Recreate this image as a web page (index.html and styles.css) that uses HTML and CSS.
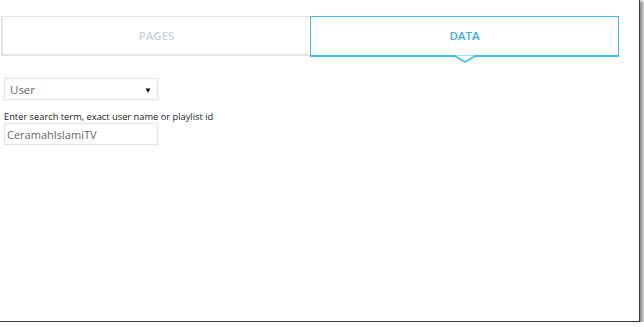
FILE: index.html
```html
<!DOCTYPE html>
<html>
<head>
<meta charset="utf-8">
<link rel="stylesheet" href="styles.css">
</head>
<body>
<div class="frame">
  <div class="tabs">
    <div class="tab">PAGES</div>
    <div class="tab active">DATA
      <svg class="pointer" width="22" height="8" viewBox="0 0 22 8"><polyline points="0,0.5 11,7 22,0.5" fill="#fff" stroke="#3fbdf6" stroke-width="1.6"/></svg>
    </div>
  </div>
  <div class="form">
    <div class="select"><span>User</span><span class="caret">▼</span></div>
    <label class="label">Enter search term, exact user name or playlist id</label>
    <div class="input">CeramahIslamiTV</div>
  </div>
</div>
</body>
</html>
```
FILE: styles.css
```css
html, body {
  margin: 0;
  padding: 0;
  background: #fff;
}
.frame {
  width: 639px;
  height: 321px;
  border-right: 1px solid #3a3a3a;
  border-bottom: 1px solid #3a3a3a;
  box-shadow: 2px 2px 3px 1px rgba(0,0,0,0.45);
  background: #fff;
  font-family: "Open Sans", "Noto Sans", sans-serif;
}
.tabs {
  display: flex;
  padding: 16px 20px 0 1px;
}
.tab {
  flex: 1;
  height: 40px;
  box-sizing: border-box;
  border: 1px solid #e4e4e4;
  border-width: 1px 0 2px 2px;
  display: flex;
  align-items: center;
  justify-content: center;
  font-size: 11.5px;
  font-weight: 600;
  color: #c9d1e0;
  position: relative;
}
.tab.active {
  height: 41px;
  border: 1px solid #3fbdf6;
  border-bottom-width: 2px;
  color: #3ea9ef;
  padding-bottom: 1px;
}
.pointer {
  position: absolute;
  left: 50%;
  margin-left: -11px;
  bottom: -8px;
}
.form {
  padding: 21px 0 0 4px;
  display: flex;
  flex-direction: column;
  align-items: flex-start;
}
.select {
  width: 154px;
  height: 22px;
  box-sizing: border-box;
  border: 1px solid #e2e2e2;
  display: flex;
  align-items: center;
  justify-content: space-between;
  padding: 0 5px 0 5px;
  font-size: 11.5px;
  color: #666;
}
.caret {
  font-size: 8px;
  color: #111;
}
.label {
  margin-top: 11px;
  font-size: 9.3px;
  color: #222;
  line-height: 12px;
}
.input {
  width: 154px;
  height: 22px;
  box-sizing: border-box;
  border: 1px solid #e2e2e2;
  display: flex;
  align-items: center;
  padding: 0 2px;
  font-size: 11px;
  color: #666;
}
```
